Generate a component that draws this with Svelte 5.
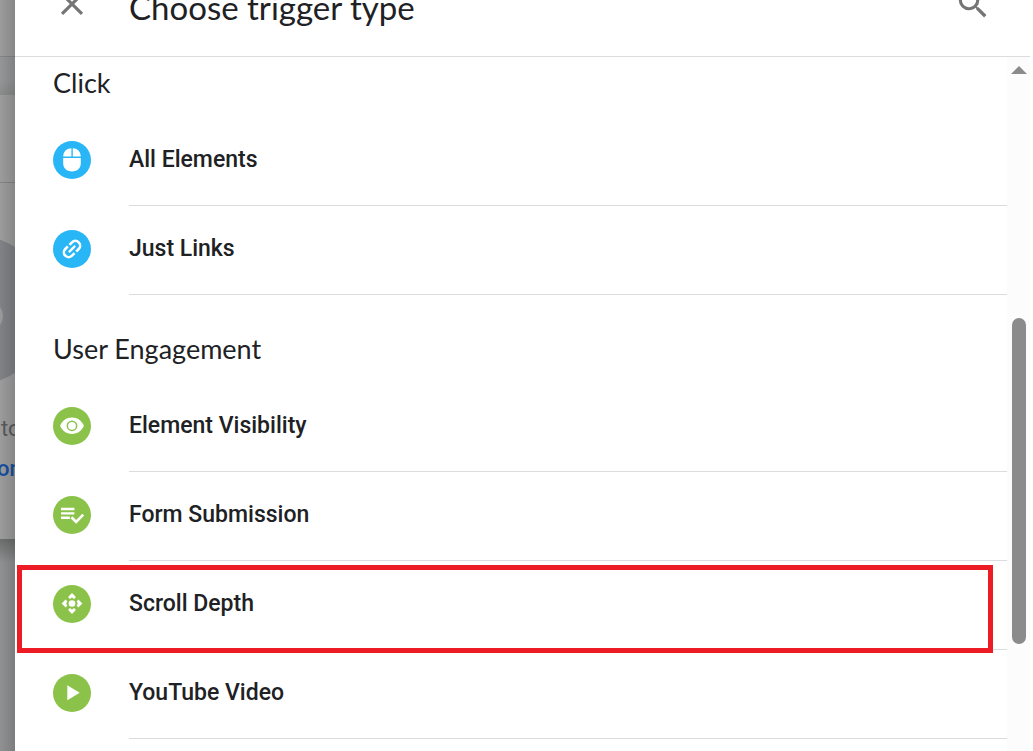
<!--
  Trigger type picker: a side panel that slides over the tag editor
-->

<script>
  const groups = [
    {
      title: 'Click',
      colour: 'blue',
      items: [
        { label: 'All Elements', icon: 'mouse' },
        { label: 'Just Links', icon: 'link' }
      ]
    },
    {
      title: 'User Engagement',
      colour: 'green',
      items: [
        { label: 'Element Visibility', icon: 'eye' },
        { label: 'Form Submission', icon: 'form' },
        { label: 'Scroll Depth', icon: 'scroll' },
        { label: 'YouTube Video', icon: 'play' }
      ]
    }
  ];

  let highlighted = $state('Scroll Depth');
</script>

<div class="page">
  <!-- Dimmed editor behind the panel -->
  <div class="editor" aria-hidden="true">
    <div class="editor-bar"></div>
    <div class="editor-tabs"></div>
    <div class="editor-card">
      <div class="card-title"></div>
      <svg class="card-art" viewBox="0 0 15 152">
        <circle cx="-26" cy="76" r="75" fill="#808286" />
        <circle cx="-12" cy="82" r="15" fill="#9a9a9a" />
      </svg>
      <span class="card-text">to</span>
      <span class="card-link">on</span>
    </div>
    <div class="editor-rest"></div>
  </div>

  <main class="panel">
    <header class="header">
      <button class="icon-button" aria-label="Close">
        <svg viewBox="0 0 24 24">
          <path d="M5.7 5.7l12.6 12.6M18.3 5.7L5.7 18.3" fill="none" stroke="#757575" stroke-width="2" />
        </svg>
      </button>
      <h1>Choose trigger type</h1>
      <button class="icon-button" aria-label="Search">
        <svg viewBox="0 0 24 24">
          <path
            fill="#757575"
            d="M15.5 14h-.79l-.28-.27A6.471 6.471 0 0 0 16 9.5 6.5 6.5 0 1 0 9.5 16c1.61 0 3.09-.59 4.23-1.57l.27.28v.79l5 4.99L20.49 19l-4.99-5zm-6 0C7.01 14 5 11.99 5 9.5S7.01 5 9.5 5 14 7.01 14 9.5 11.99 14 9.5 14z"
          />
        </svg>
      </button>
    </header>

    <div class="body">
      <div class="list">
        {#each groups as group}
          <section class="group">
            <h2>{group.title}</h2>
            {#each group.items as item}
              <button
                class="row"
                class:highlighted={item.label === highlighted}
                onclick={() => (highlighted = item.label)}
              >
                <span class="badge {group.colour}">
                  <svg viewBox="0 0 38 38" fill="#fff">
                    {#if item.icon === 'mouse'}
                      <path d="M18.4 7.2v8.4H10.2C10.4 10.8 13 7.6 18.4 7.2zM19.8 7.2c5.2.4 7.8 3.6 8 8.4h-8zM10.2 17h17.6v5.2c0 5-3.6 8.2-8.8 8.2s-8.8-3.2-8.8-8.2z" />
                    {:else if item.icon === 'link'}
                      <g transform="translate(19 19) rotate(-45) scale(.95) translate(-12 -12)">
                        <path d="M10.8 17H7a5 5 0 0 1 0-10h3.8M13.2 7H17a5 5 0 0 1 0 10h-3.8" fill="none" stroke="#fff" stroke-width="2.7" />
                        <path d="M7.4 10.8h9.2v2.4H7.4z" />
                      </g>
                    {:else if item.icon === 'eye'}
                      <path fill-rule="evenodd" d="M19 10.5c-5.4 0-10 3.4-11.9 8.3C9 23.7 13.6 27 19 27s10-3.3 11.9-8.2C29 13.9 24.4 10.5 19 10.5zm0 13.7a5.4 5.4 0 1 1 0-10.8 5.4 5.4 0 0 1 0 10.8z" />
                      <circle cx="19" cy="18.8" r="3.9" />
                    {:else if item.icon === 'form'}
                      <path d="M8 11.8h13.4v2.4H8zM8 16.200h13.400v2.400H8zM8 20.600h8.800V23H8z" />
                      <path d="M18.400 21.200l4.800 4.600 7-7.200" fill="none" stroke="#fff" stroke-width="2.600" />
                    {:else if item.icon === 'scroll'}
                      <circle cx="19" cy="18.5" r="3.3" />
                      {#each [0, 90, 180, 270] as angle}
                        <path
                          transform="rotate({angle} 19 18.5)"
                          d="M19 8.1l3.9 4-1.800 1.800L19 12.600l-2.100 1.300-1.800-1.800z"
                        />
                      {/each}
                    {:else}
                      <path d="M14.3 11.3v15l12.400-7.500z" />
                    {/if}
                  </svg>
                </span>
                <span class="label">{item.label}</span>
              </button>
            {/each}
          </section>
        {/each}
      </div>

      <div class="scrollbar" aria-hidden="true">
        <svg class="arrow" viewBox="0 0 16 8"><path d="M8 0l8 8H0z" fill="#8b8b8b" /></svg>
        <div class="track-before"></div>
        <div class="thumb"></div>
        <div class="track-after"></div>
      </div>
    </div>
  </main>
</div>

<style>
  :global(body) {
    margin: 0;
    background: #fff;
  }

  .page {
    display: flex;
    height: 100vh;
    padding-right: 3px;
    overflow: hidden;
    font-family: Roboto, 'Liberation Sans', sans-serif;
    color: #202124;
  }

  /* === Dimmed editor === */

  .editor {
    position: relative;
    display: flex;
    flex-direction: column;
    flex: 0 0 15px;
    overflow: hidden;
    background: #9c9c9c;
  }

  /* Shadow that the panel casts to its left */
  .editor::after {
    content: '';
    position: absolute;
    inset: 0;
    background: linear-gradient(to right, rgba(0, 0, 0, 0), rgba(0, 0, 0, 0.14));
  }

  .editor-bar {
    flex: 0 0 56px;
    border-bottom: 1px solid #858585;
  }

  .editor-tabs {
    flex: 0 0 38px;
    background: linear-gradient(#949698 60%, #8a8c8b);
  }

  .editor-card {
    display: flex;
    flex-direction: column;
    flex: 0 0 444px;
  }

  .card-title {
    height: 87px;
    border-bottom: 1px solid #838486;
  }

  .card-art {
    width: 15px;
    height: 152px;
    margin-top: 51px;
  }

  .card-text,
  .card-link {
    padding-left: 1px;
    font-size: 22px;
    line-height: 40px;
    color: #5a5a5a;
  }

  .card-text {
    margin-top: 23px;
  }

  .card-link {
    margin-left: -4px;
    font-weight: 500;
    color: #174ea0;
  }

  .editor-rest {
    flex: 1;
    background: linear-gradient(#6c6d6d, #8f9192 24px);
  }

  /* === Panel === */

  .panel {
    display: flex;
    flex-direction: column;
    flex: 1;
    min-width: 0;
    background: #fff;
  }

  .header {
    display: flex;
    align-items: center;
    gap: 38px;
    margin-top: -15px;
    padding: 0 38px 33px;
    border-bottom: 1px solid #dadce0;
  }

  h1,
  h2 {
    margin: 0;
    font-family: Lato, 'Open Sans', sans-serif;
    font-weight: 400;
  }

  h1 {
    flex: 1;
    align-self: flex-end;
    font-size: 33px;
    line-height: 32px;
  }

  h2 {
    padding: 38px 38px 18px;
    font-size: 27px;
    line-height: 32px;
  }

  .group:first-child h2 {
    padding-top: 10px;
  }

  button {
    padding: 0;
    border: 0;
    background: none;
    font: inherit;
    color: inherit;
    text-align: left;
    cursor: pointer;
  }

  .icon-button,
  .icon-button svg {
    display: block;
    width: 38px;
    height: 38px;
  }

  .body {
    display: flex;
    flex: 1;
    min-height: 0;
  }

  .list {
    flex: 1;
    overflow: hidden;
  }

  .row {
    position: relative;
    display: flex;
    gap: 38px;
    width: 100%;
    padding-left: 38px;
  }

  .badge {
    width: 38px;
    height: 38px;
    margin-top: 24px;
    border-radius: 50%;
  }

  .badge svg {
    display: block;
  }

  .blue {
    background: #29b6f6;
  }

  .green {
    background: #8bc34a;
  }

  .label {
    flex: 1;
    padding: 25px 0 27px;
    border-bottom: 1px solid #dadce0;
    font-size: 23px;
    font-weight: 500;
    line-height: 36px;
  }

  .highlighted::after {
    content: '';
    position: absolute;
    inset: 4px 14px -3px 2px;
    border: 5px solid #ed1c24;
  }

  /* === Scrollbar === */

  .scrollbar {
    display: flex;
    flex-direction: column;
    align-items: center;
    flex: 0 0 23px;
    background: #fcfcfc;
  }

  .arrow {
    width: 16px;
    height: 8px;
    margin-top: 9px;
  }

  .track-before {
    flex: 244;
  }

  .thumb {
    flex: 326;
    width: 14px;
    border-radius: 7px;
    background: #8b8b8b;
  }

  .track-after {
    flex: 107;
  }
</style>
